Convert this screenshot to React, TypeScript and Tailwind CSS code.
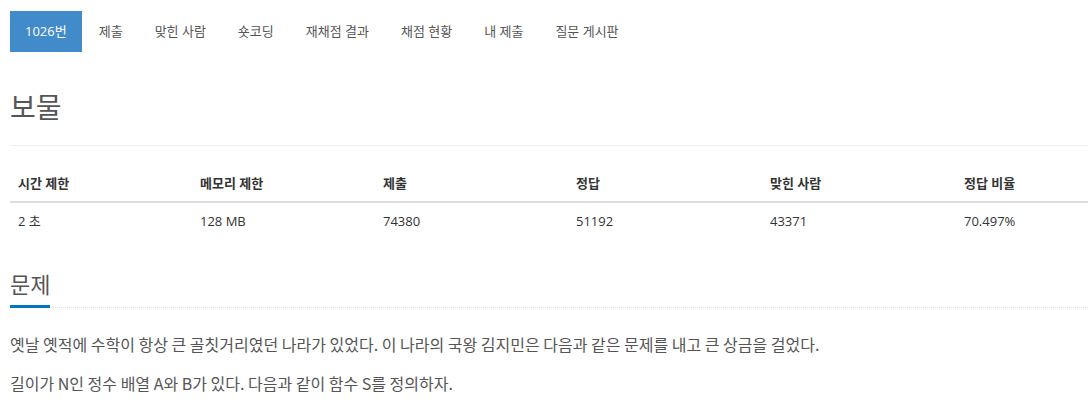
import React from "react";

const tabs = ["제출", "맞힌 사람", "숏코딩", "재채점 결과", "채점 현황", "내 제출", "질문 게시판"];
const heads = ["시간 제한", "메모리 제한", "제출", "정답", "맞힌 사람", "정답 비율"];
const vals = ["2 초", "128 MB", "74380", "51192", "43371", "70.497%"];
const font = { fontFamily: '"Open Sans", "Noto Sans CJK KR", sans-serif' };

export default function App() {
  return (
    <div className="w-[1088px] h-[407px] overflow-hidden bg-white pl-[10px]" style={font}>
      <ul className="flex mt-[11px] h-[41px] text-[13px]">
        <li className="h-[41px] px-[15px] flex items-center bg-[#428bca] text-white">1026번</li>
        {tabs.map((t) => (
          <li key={t} className="ml-[2px] h-[41px] px-[15px] flex items-center text-[#555]">
            {t}
          </li>
        ))}
      </ul>
      <h1 className="mt-[40px] text-[28px] leading-[1.1] text-[#555] font-normal">보물</h1>
      <div className="mt-[22px] border-b border-[#eee]" />
      <div className="mt-[19px] text-[13px] text-[#333]">
        <div className="grid grid-cols-[182px_183px_193px_194px_194px_1fr] border-b-2 border-[#ddd]">
          {heads.map((h) => (
            <div key={h} className="px-[8px] py-[8px] leading-[20px] font-bold">
              {h}
            </div>
          ))}
        </div>
        <div className="grid grid-cols-[182px_183px_193px_194px_194px_1fr]">
          {vals.map((v) => (
            <div key={v} className="px-[8px] py-[8px] leading-[20px]">
              {v}
            </div>
          ))}
        </div>
      </div>
      <div className="mt-[33px] border-b border-dotted border-[#ddd] flex">
        <span className="text-[22px] leading-[1.1] text-[#555] pb-[9px] border-b-[3px] border-[#0076c0] -mb-px">
          문제
        </span>
      </div>
      <div className="mt-[24px] text-[16px] leading-[24px] text-[#555]" style={{ fontFamily: '"Noto Sans CJK KR", sans-serif' }}>
        <p className="mb-[15px]">
          옛날 옛적에 수학이 항상 큰 골칫거리였던 나라가 있었다. 이 나라의 국왕 김지민은 다음과 같은 문제를 내고 큰 상금을 걸었다.
        </p>
        <p className="mb-[15px]">길이가 N인 정수 배열 A와 B가 있다. 다음과 같이 함수 S를 정의하자.</p>
      </div>
    </div>
  );
}
